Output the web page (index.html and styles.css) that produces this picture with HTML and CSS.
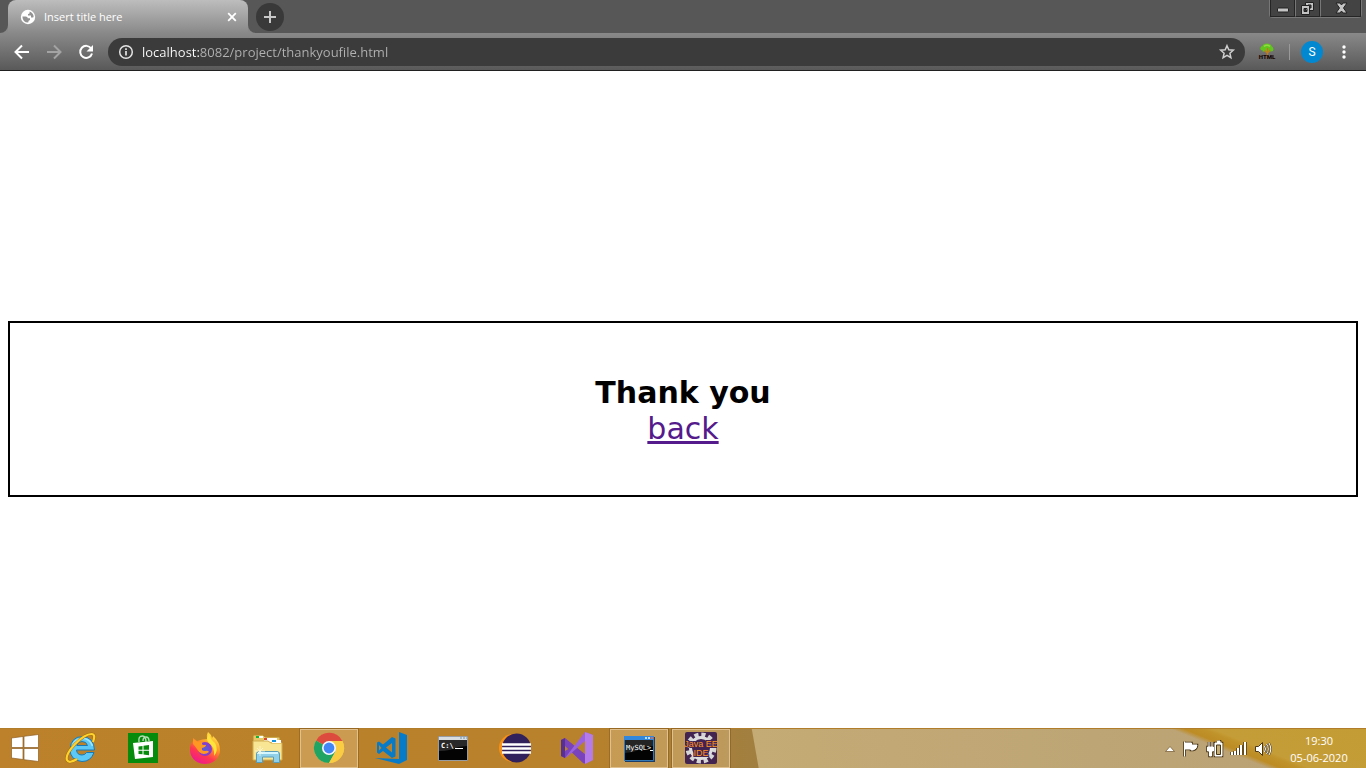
FILE: index.html
```html
<!DOCTYPE html>
<html lang="en">
<head>
<meta charset="utf-8">
<title>Insert title here</title>
<link rel="stylesheet" href="styles.css">
</head>
<body>
<header class="browser">
  <div class="tabstrip">
    <div class="tab">
      <svg class="tab-foot tab-foot-left" width="8" height="8" viewBox="0 0 8 8"><path d="M8 0V8H0A8 8 0 0 0 8 0Z" fill="#898989"/></svg>
      <svg width="16" height="16" viewBox="0 0 16 16"><circle cx="8" cy="8" r="7.2" fill="#fff"/><path d="M2.4 7.4H5.6Q7.8 7.5 7.8 9.2H10V11Q8.2 11.1 8.2 13.6Q2.6 13.3 2.4 7.4ZM9.6 2.5V3.8Q9.6 5 8 5V6.6H11V8.6H12.6Q13.7 8.8 13.6 7Q12.9 3.5 9.6 2.5Z" fill="#939393"/></svg>
      <span class="tab-title">Insert title here</span>
      <button class="plain" aria-label="Close tab"><svg width="16" height="16" viewBox="0 0 16 16"><path d="M4.2 4.2l7.6 7.6M11.8 4.2l-7.6 7.6" stroke="#fff" stroke-width="1.8"/></svg></button>
      <svg class="tab-foot tab-foot-right" width="8" height="8" viewBox="0 0 8 8"><path d="M0 0V8H8A8 8 0 0 1 0 0Z" fill="#898989"/></svg>
    </div>
    <button class="new-tab" aria-label="New tab"><svg width="28" height="28" viewBox="0 0 28 28"><path d="M14 8v12M8 14h12" stroke="#c8c8c8" stroke-width="2"/></svg></button>
    <div class="window-controls">
      <button aria-label="Minimize"><svg width="24" height="17" viewBox="0 0 24 17"><rect x="6.500" y="8" width="11" height="4" rx="1" fill="#c4c4c4" stroke="#222"/></svg></button>
      <button aria-label="Restore"><svg width="24" height="17" viewBox="0 0 24 17"><path fill="#c4c4c4" stroke="#222" fill-rule="evenodd" d="M9.500 2.500h8v8h-8zM12 5h3v3h-3z"/><path fill="#c4c4c4" stroke="#222" fill-rule="evenodd" d="M5.500 5.500h8v9h-8zM8 8.500h3v3h-3z"/></svg></button>
      <button class="window-close" aria-label="Close"><svg width="24" height="17" viewBox="0 0 24 17"><path d="M7 3h4l1.500 2L14 3h4l-3.500 5 3.500 5h-4l-1.500-2-1.500 2H7l3.500-5z" fill="#c4c4c4" stroke="#222"/></svg></button>
    </div>
  </div>
  <div class="toolbar">
    <nav class="history">
      <button class="plain" aria-label="Back"><svg width="20" height="20" viewBox="0 0 20 20"><path d="M17 10H4M10 3.500L3.500 10L10 16.500" fill="none" stroke="#fff" stroke-width="2"/></svg></button>
      <button class="plain" aria-label="Forward"><svg width="20" height="20" viewBox="0 0 20 20"><path d="M3 10h13M10 3.500l6.500 6.500L10 16.500" fill="none" stroke="#a3a3a3" stroke-width="2"/></svg></button>
      <button class="plain" aria-label="Reload"><svg width="20" height="20" viewBox="0 0 20 20"><path d="M15.200 6.500A6 6 0 1 0 16 11.500" fill="none" stroke="#fff" stroke-width="2"/><path d="M17 3v6.500h-6.500z" fill="#fff"/></svg></button>
    </nav>
    <div class="omnibox">
      <svg width="16" height="16" viewBox="0 0 16 16"><circle cx="8" cy="8" r="6.300" fill="none" stroke="#e4e4e4" stroke-width="1.500"/><path d="M8 7v4.500M8 4.200v1.700" stroke="#e4e4e4" stroke-width="1.700"/></svg>
      <input class="url" type="text" aria-label="Address" value="localhost:8082/project/thankyoufile.html">
      <button class="plain" aria-label="Bookmark"><svg width="18" height="18" viewBox="0 0 18 18"><path d="M9 2.700l1.800 4.100 4.500.4-3.400 3 1 4.400L9 12.300l-3.900 2.300 1-4.400-3.400-3 4.500-.4z" fill="none" stroke="#cfcfcf" stroke-width="1.500"/></svg></button>
    </div>
    <button class="plain" aria-label="HTML extension"><svg width="20" height="20" viewBox="0 0 20 20"><path d="M6 8Q2.500 9 3.500 5.500Q4 4 5.500 4Q6 1.500 10 1.500Q14 1.500 14.500 4Q16.500 5 16.500 7.500Q16.500 10 13 9.500Q10 11 8 9.500Q4 10 6 8Z" fill="#61c51d"/><path d="M7 4.500q3-2.500 6 0" stroke="#92dc43" stroke-width="1.500" fill="none"/><path d="M10.500 6v9M7.500 8.500l3 2.500 2.500-3" stroke="#c07c1c" stroke-width="1.400" fill="none"/><text x="10" y="17" text-anchor="middle" class="ext-text">HTML</text></svg></button>
    <span class="divider"></span>
    <button class="avatar" aria-label="Profile S">S</button>
    <button class="plain" aria-label="Browser menu"><svg width="16" height="20" viewBox="0 0 16 20"><g fill="#fff"><circle cx="8" cy="5" r="1.700"/><circle cx="8" cy="10" r="1.700"/><circle cx="8" cy="15" r="1.700"/></g></svg></button>
  </div>
</header>

<main class="page">
  <div class="message">
    <strong>Thank you</strong>
    <a href="#back">back</a>
  </div>
</main>

<footer class="taskbar">
  <button class="start" aria-label="Start"><svg width="28" height="28" viewBox="0 0 28 28"><path d="M.5 4L12 2.500V13.500H.5ZM13 2.300L27.500.5V13.500H13ZM.5 14.500H12V25.500L.5 24ZM13 14.500H27.500V27.500L13 25.700Z" fill="#fff" stroke="#8c5f25" stroke-width=".7"/></svg></button>
  <nav class="apps">
    <button class="app" aria-label="Internet Explorer"><svg width="32" height="32" viewBox="0 0 32 32"><path d="M29.500 18H11.500Q12 23 17 23Q20 23 21.500 20.500H29Q26 29.500 17 29.500Q5 28.500 5 17Q6 5 17 4.500Q29 5 29.500 18ZM11.800 13.500H22.500Q21.500 9.500 17 9.500Q13 9.500 11.800 13.500Z" fill="#5cc8f5" stroke="#1879b5"/><path d="M7.500 14Q9 7.500 17 6.200Q25 6.500 27.500 14" fill="none" stroke="#a5e7ff" stroke-width="1.500"/><path d="M28 10Q31 2 26.500 2Q20 2 10 12Q0 23 2 28Q4 32 12 27" fill="none" stroke="#a06c0c" stroke-width="3"/><path d="M28 10Q31 2 26.500 2Q20 2 10 12Q0 23 2 28Q4 32 12 27" fill="none" stroke="#ffd22e" stroke-width="2.200"/></svg></button>
    <button class="app" aria-label="Store"><svg width="32" height="32" viewBox="0 0 32 32"><path d="M1 1h30v30H1z" fill="#078b0c"/><path d="M12 10Q11 4 15.500 4Q19 4 19 10M16 9Q16 5 19 5Q22 5 22 9" fill="none" stroke="#b9dfb9" stroke-width="1.400"/><path d="M6 11L26 9V25L8 27Z" fill="#fff"/><path d="M11.500 14.500L15.500 14V17.800H11.500ZM16.500 13.800L22 13V17.800H16.500ZM11.500 18.800H15.500V22.300L11.500 22ZM16.500 18.800H22V23.300L16.500 22.500Z" fill="#078b0c"/></svg></button>
    <button class="app" aria-label="Firefox"><svg width="32" height="32" viewBox="0 0 32 32"><defs><linearGradient id="fire" x1=".8" y1="0" x2=".25" y2="1"><stop stop-color="#fff04a"/><stop offset=".4" stop-color="#ff9626"/><stop offset=".7" stop-color="#ff3750"/><stop offset="1" stop-color="#ed1598"/></linearGradient><radialGradient id="globe"><stop stop-color="#5364d7"/><stop offset="1" stop-color="#9038c8"/></radialGradient></defs><path d="M19 0Q22 2 23 6Q24 5 24 4Q31 10 31 18A15 14 0 0 1 1 18Q1 12 4 9V6L8 9Q14 7 18 7Q17 3 19 0Z" fill="url(#fire)"/><circle cx="16" cy="17" r="7" fill="url(#globe)"/><path d="M4 7L9 10L14 9Q12 12 14 13H17Q17 15 13 16Q12 19 16 19Q19 18 20 20Q15 24 10 20Q6 14 4 12Z" fill="#ff9822"/><path d="M20 2Q21 7 26 11Q30 18 25 24Q26 15 20 11Q16 8 20 2" fill="#ffe43d"/></svg></button>
    <button class="app" aria-label="File Explorer"><svg width="32" height="32" viewBox="0 0 32 32"><path d="M2 4Q2 3 3 3H12L14 5H28Q29 5 29 6V26H2Z" fill="#e6c869" stroke="#b5882d"/><path d="M5 4h7v2H5z" fill="#fff"/><path d="M5 4h3v2H5z" fill="#16b62b"/><path d="M13 6h13v4H13z" fill="#fff"/><path d="M13 6h3v2h-3z" fill="#dd4528"/><path d="M2 9H17L20 11H31V28H2Z" fill="#f8e694" stroke="#d2ac50"/><path d="M21 8h9v3h-9z" fill="#fff"/><path d="M21 8h4v2h-4z" fill="#1594dd"/><path d="M5.500 30.500V22Q5.500 19.500 8 19.500H26Q28.500 19.500 28.500 22V30.500H22.500V25H11.500V30.500Z" fill="#91d0e9" stroke="#5a9db9"/><path d="M7 21h20" stroke="#d4f6ff" stroke-width="2"/><path d="M9 14v10M4 19h10M6 16l6 6M12 16l-6 6" stroke="#fffbe0" stroke-width=".7"/></svg></button>
    <button class="app active" aria-label="Chrome"><svg width="32" height="32" viewBox="0 0 32 32"><circle cx="16" cy="16" r="15" fill="#f9cc44"/><path d="M16 16L3 8.500A15 15 0 0 1 29.500 9H16Z" fill="#dc4b3e"/><path d="M16 16L3 8.500A15 15 0 0 0 16 31L22.500 19.500Z" fill="#20a463"/><path d="M16 9H29.500A15 15 0 0 1 16 31L22.500 19.500Z" fill="#f9cc44"/><circle cx="16" cy="16" r="7" fill="#f4f7ff"/><circle cx="16" cy="16" r="5.400" fill="#4286f5"/></svg></button>
    <button class="app" aria-label="Visual Studio Code"><svg width="32" height="32" viewBox="0 0 32 32"><path d="M24 0L32 3V28L24 32L0 26L24 27Z" fill="#087bc8"/><path fill-rule="evenodd" d="M17 5L20.500 6.500V24.500L17 26L8 19L4 22L2 20.500V10.500L4 9.500L8 12.500ZM17 11L11 15.500L17 20.500ZM4 13V18.500L6.500 16Z" fill="#087bc8"/></svg></button>
    <button class="app" aria-label="Command Prompt"><svg width="32" height="32" viewBox="0 0 32 32"><path d="M1.500 4.500h29v24h-29z" fill="#030303" stroke="#969ca2"/><path d="M2 5h28v3H2z" fill="#d7dde1"/><path d="M23 6h2m1 0h2m1 0h1" stroke="#718fa6"/><path d="M2 19Q13 19 21 15L30 14V8H2Z" fill="#292929"/><text x="4" y="16" class="prompt">C:\</text><path d="M18 16.500h8" stroke="#fff"/></svg></button>
    <button class="app" aria-label="Eclipse"><svg width="34" height="32" viewBox="0 0 34 32"><circle cx="15" cy="16" r="14" fill="#f99114"/><circle cx="18.500" cy="16" r="14.500" fill="#30215c"/><path d="M4 12.500h29M4 16.500h29M4 20.500h29" stroke="#fff" stroke-width="2.300"/></svg></button>
    <button class="app" aria-label="Visual Studio"><svg width="32" height="32" viewBox="0 0 32 32"><path d="M0 8L4 6L25 23V32L22 31L4 14V19L9 16L13 18L4 26L0 24Z" fill="#7a43bb"/><path d="M0 8L4 6V26L0 24Z" fill="#583092"/><path d="M4 26L24 0L32 3V28L24 32V9L7 24Z" fill="#9b62df"/><path d="M24 0L32 3V28L24 32Z" fill="#b47be9"/></svg></button>
    <button class="app active" aria-label="MySQL"><svg width="32" height="32" viewBox="0 0 32 32"><path d="M2 5h30v25H2z" fill="#1d3e67"/><path d="M1.500 4.500h29v24h-29z" fill="#030303" stroke="#3479b6"/><path d="M1 4h30v4H1z" fill="#3187dc"/><path d="M22 6h2m1 0h2" stroke="#b4e1ff" stroke-width="2"/><path d="M28 6h2" stroke="#f06038" stroke-width="2"/><path d="M2 21Q15 20 20 15L30 14V8H2Z" fill="#242424"/><text x="3" y="18" class="mysql">MySQL&gt;</text><path d="M27 18.500h3" stroke="#fff"/></svg></button>
    <button class="app active" aria-label="Java EE IDE"><svg width="32" height="32" viewBox="0 0 32 32"><rect width="32" height="32" rx="2" fill="#432450"/><circle cx="16" cy="16" r="13" fill="none" stroke="#d5d5d5" stroke-width="5" stroke-dasharray="4 2.800"/><circle cx="16" cy="16" r="10.500" fill="#412253" stroke="#ddd" stroke-width="3"/><text x="16" y="15" text-anchor="middle" class="java">Java EE</text><text x="16" y="24" text-anchor="middle" class="java">IDE</text></svg></button>
  </nav>
  <div class="tray">
    <button class="plain" aria-label="Show hidden icons"><svg width="12" height="18" viewBox="0 0 12 18"><path d="M1.500 11.500L6 6.500L10.500 11.500Z" fill="#fff" stroke="#70542a" stroke-width=".7"/></svg></button>
    <button class="plain" aria-label="Action center"><svg width="18" height="18" viewBox="0 0 18 18"><path d="M2.500 1.500v15M3 3h6.500v2h5.500q0 4-4 5H9v-1H3" fill="#fff" stroke="#493719" stroke-width="2.600"/><path d="M2.500 1.500v15M3 3h6.500v2h5.500q0 4-4 5H9v-1H3" fill="#fff" stroke="#fff"/></svg></button>
    <button class="plain" aria-label="Battery"><svg width="18" height="18" viewBox="0 0 18 18"><path d="M9 3h7v13H9zM11 1h3v2h-3M3 2v5M6 2v5M1.500 7h6v4h-2v5h-2v-5h-2z" fill="#fff" stroke="#493719" stroke-width="2.600"/><path d="M9 3h7v13H9zM11 1h3v2h-3M3 2v5M6 2v5M1.500 7h6v4h-2v5h-2v-5h-2z" fill="#fff" stroke="#fff"/><path d="M10.500 5h4v9.500h-4z" fill="#c6ac75" stroke="#493719"/></svg></button>
    <button class="plain" aria-label="Network"><svg width="18" height="18" viewBox="0 0 18 18"><path d="M2 12v3M5 11v4M8 8v7M11 5v10M15 2v13" stroke="#493719" stroke-width="3.500"/><path d="M2 12v3M5 11v4M8 8v7M11 5v10M15 2v13" stroke="#fff" stroke-width="2"/></svg></button>
    <button class="plain" aria-label="Volume"><svg width="18" height="18" viewBox="0 0 18 18"><path d="M1.500 6.500h3l4-4v13l-4-4h-3z" fill="#fff" stroke="#493719"/><path d="M10.500 6q2 3 0 6M12.500 4q3.500 5 0 10M15 3q3.500 6 0 12" fill="none" stroke="#493719" stroke-width="2"/><path d="M10.500 6q2 3 0 6M12.500 4q3.500 5 0 10M15 3q3.500 6 0 12" fill="none" stroke="#fff"/></svg></button>
  </div>
  <time class="clock" datetime="2020-06-05T19:30"><span>19:30</span><span>05-06-2020</span></time>
</footer>
</body>
</html>
```
FILE: styles.css
```css
* { box-sizing: border-box; }
html, body { height: 100%; }
body {
  margin: 0;
  display: flex;
  flex-direction: column;
  background: #fff;
  font-family: "Open Sans", "Noto Sans", sans-serif;
  font-size: 12px;
}
button { padding: 0; border: 0; font: inherit; color: inherit; }
svg { display: block; flex: none; }
.plain { background: none; }

.tabstrip {
  display: flex;
  height: 33px;
  padding-left: 8px;
  background: #575757;
}
.tab {
  position: relative;
  display: flex;
  align-items: center;
  gap: 8px;
  flex: 0 1 240px;
  padding: 0 8px 0 12px;
  border-radius: 8px 8px 0 0;
  background: linear-gradient(#bdbdbd, #898989);
  color: #fff;
}
.tab-foot { position: absolute; bottom: 0; }
.tab-foot-left { left: -8px; }
.tab-foot-right { right: -8px; }
.tab-title { flex: 1; font-size: 11px; }
.new-tab {
  width: 28px;
  height: 28px;
  margin: 3px 0 0 8px;
  border-radius: 50%;
  background: #393939;
}
.window-controls {
  display: flex;
  height: 18px;
  margin: 0 4px 0 auto;
  border: 1px solid #777;
  border-top: 0;
  border-radius: 0 0 4px 4px;
}
.window-controls button {
  display: flex;
  justify-content: center;
  width: 25px;
  background: #434343;
  border: 1px solid #252525;
  border-top: 0;
}
.window-controls button + button { border-left-color: #777; }
.window-controls .window-close { width: 41px; }

.toolbar {
  display: flex;
  align-items: center;
  height: 38px;
  padding: 0 14px 0 12px;
  border-bottom: 1px solid #202020;
  background: linear-gradient(#898989, #595959);
}
.history { display: flex; gap: 12px; margin-right: 12px; }
.omnibox {
  display: flex;
  align-items: center;
  flex: 1;
  height: 28px;
  margin-right: 12px;
  padding: 0 9px 0 10px;
  border-radius: 14px;
  background: #3b3b3b;
}
.url {
  flex: 1;
  min-width: 0;
  height: 28px;
  padding: 0 8px;
  border: 0;
  outline: 0;
  font: 13px "Open Sans", "Noto Sans", sans-serif;
  color: transparent;
  background: linear-gradient(90deg, #fff 66px, #b2b2b2 66px);
  background-clip: text;
}
.divider { width: 1px; height: 16px; margin: 0 11px 0 12px; background: #999; }
.avatar {
  width: 22px;
  height: 22px;
  margin-right: 13px;
  border-radius: 50%;
  background: #0288d1;
  color: #fff;
  font: 12px Roboto, sans-serif;
}
.ext-text { font: 900 6px Roboto, sans-serif; fill: #160600; }

.page { flex: 1; padding: 250px 8px 0; }
.message {
  display: flex;
  flex-direction: column;
  align-items: center;
  padding: 52px 50px 48px;
  border: 2px solid #000;
  font: 30px/36px Verdana, "DejaVu Sans", sans-serif;
}
.message a { color: #551a8b; }

.taskbar {
  display: flex;
  align-items: center;
  height: 40px;
  border-top: 1px solid #b17d2b;
  background:
    linear-gradient(22deg, transparent 38px, #bd8c24 43px, #c0922a 50px, #c59d38 54px, #c49c35) right / 200px 100% no-repeat,
    linear-gradient(80deg, transparent 10px, #c4aa74 11px, #b9a176) right / calc(100% - 748px) 100% no-repeat,
    linear-gradient(90deg, #bc812a, #b8812b 43%, #a07f41 56%);
}
.start { display: flex; justify-content: center; width: 50px; padding-bottom: 2px; background: none; }
.apps { display: flex; gap: 4px; margin-left: 2px; }
.app {
  display: flex;
  align-items: center;
  justify-content: center;
  width: 58px;
  height: 39px;
  padding-bottom: 2px;
  border: 1px solid transparent;
  background: none;
}
.active {
  border-color: #dfc08e;
  background: rgba(235, 205, 155, .34);
  box-shadow: 0 0 0 1px rgba(105, 70, 20, .35);
}
.prompt { font: bold 7px "DejaVu Sans Mono", monospace; fill: #fff; }
.mysql { font: 7px "DejaVu Sans Mono", monospace; fill: #fff; }
.java {
  font: 9px "Liberation Sans", sans-serif;
  fill: #ff9226;
  stroke: #432450;
  stroke-width: 2px;
  paint-order: stroke;
}
.tray { display: flex; align-items: center; gap: 6px; margin-left: auto; }
.clock {
  display: flex;
  flex-direction: column;
  align-items: center;
  width: 94px;
  color: #fff;
  font-size: 11px;
  line-height: 17px;
}
```
